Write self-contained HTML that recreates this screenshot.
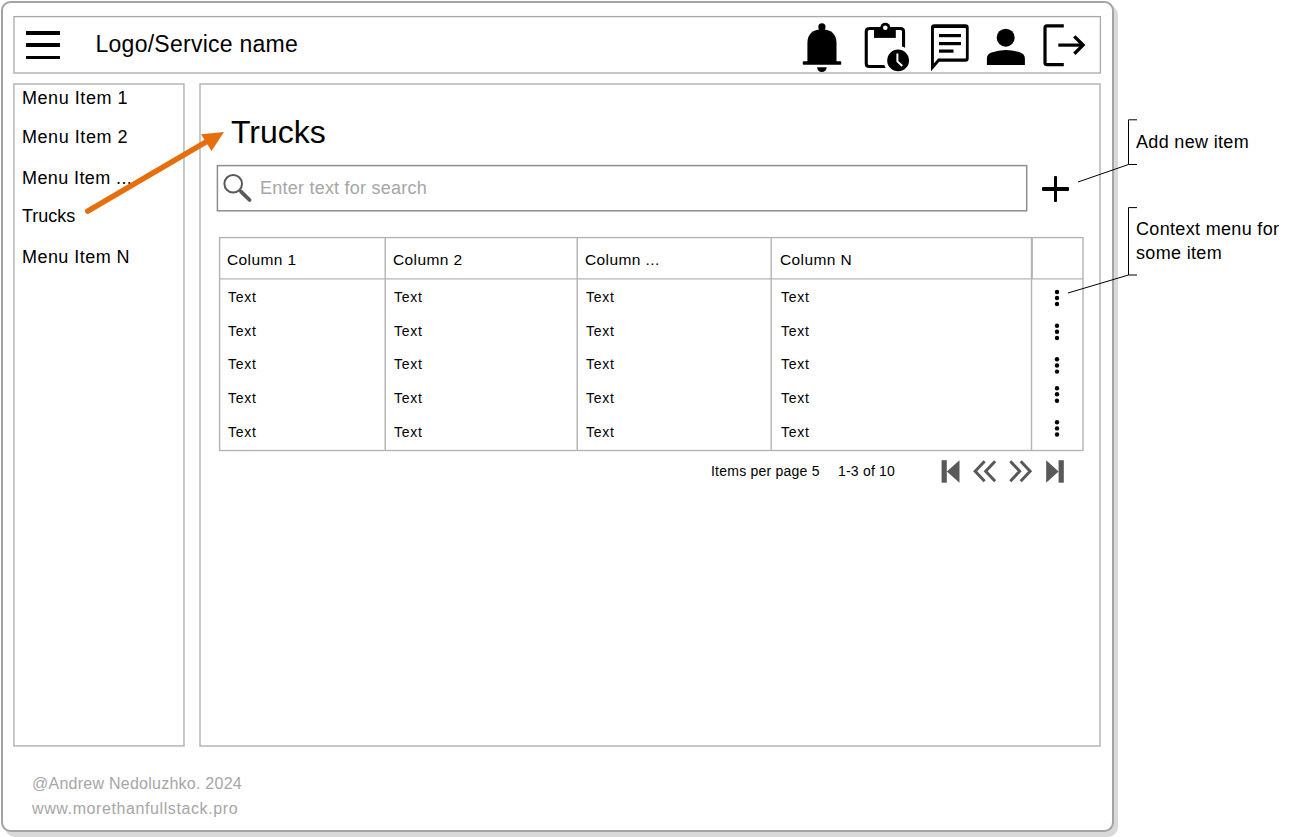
<!DOCTYPE html>
<html><head><meta charset="utf-8">
<style>
html,body{margin:0;padding:0;background:#fff;}
body{width:1295px;height:837px;position:relative;overflow:hidden;font-family:"Liberation Sans",sans-serif;color:#000;}
.a{position:absolute;white-space:nowrap;}
.box{position:absolute;box-sizing:border-box;border:1px solid #a6a6a6;background:#fff;}
.t{position:absolute;white-space:nowrap;line-height:1;transform-origin:0 0;}
</style></head><body>
<!-- outer frame shadow -->
<div class="a" style="left:5px;top:5px;width:1113px;height:832px;border-radius:10px;background:#d9d9d9;"></div>
<div class="a" style="left:1px;top:1px;width:1113px;height:831px;box-sizing:border-box;border:2px solid #a4a4a4;border-radius:9.5px;background:#fff;"></div>

<!-- header -->
<!-- hamburger -->
<div class="a" style="left:26px;top:31.05px;width:34px;height:3.5px;background:#000;border-radius:0.5px;"></div>
<div class="a" style="left:26px;top:43.35px;width:34px;height:3.5px;background:#000;border-radius:0.5px;"></div>
<div class="a" style="left:26px;top:55.75px;width:34px;height:3.5px;background:#000;border-radius:0.5px;"></div>
<div class="t" style="left:95.5px;top:33px;font-size:23px;letter-spacing:0.26px;">Logo/Service name</div>

<!-- header icons -->
<svg class="a" style="left:0;top:0" width="1295" height="100" viewBox="0 0 1295 100">
  <!-- bell -->
  <circle cx="821.9" cy="26.9" r="3.6" fill="#000"/>
  <path d="M807.4 62 L807.4 43 C807.4 34 813 29.3 821.9 29.3 C830.8 29.3 836.5 34 836.5 43 L836.5 62 Z" fill="#000"/>
  <rect x="802.8" y="61.2" width="38.4" height="3.5" rx="0.8" fill="#000"/>
  <path d="M817.1 67.3 L826.7 67.3 A4.8 4.8 0 0 1 817.1 67.3 Z" fill="#000"/>
  <!-- clipboard -->
  <path d="M869 28.55 L900.5 28.55 Q903.55 28.55 903.55 31.6 L903.55 63.4 Q903.55 66.45 900.5 66.45 L869.3 66.45 Q866.25 66.45 866.25 63.4 L866.25 31.6 Q866.25 28.55 869.3 28.55 Z" fill="none" stroke="#000" stroke-width="3.1"/>
  <rect x="874" y="27" width="21.8" height="10.9" fill="#000"/>
  <circle cx="885.3" cy="27.8" r="5.1" fill="#000"/>
  <circle cx="885.3" cy="27.8" r="2.3" fill="#fff"/>
  <circle cx="898.1" cy="60.4" r="14.5" fill="#fff"/>
  <circle cx="898.1" cy="60.4" r="10.9" fill="#000"/>
  <path d="M897.4 53.6 L897.4 61.4 L902.3 66" fill="none" stroke="#fff" stroke-width="2"/>
  <!-- chat -->
  <path fill-rule="evenodd" fill="#000" d="M931 71.3 L931 27.6 Q931 24.3 934.3 24.3 L965.4 24.3 Q968.7 24.3 968.7 27.6 L968.7 58.5 Q968.7 61.8 965.4 61.8 L939.2 61.8 Z M933.9 63.4 L938.1 58.6 L965 58.6 Q965.9 58.6 965.9 57.7 L965.9 28.8 Q965.9 27.9 965 27.9 L934.8 27.9 Q933.9 27.9 933.9 28.8 Z"/>
  <rect x="939" y="34" width="22" height="3.2" fill="#000"/>
  <rect x="939" y="42" width="22" height="3.2" fill="#000"/>
  <rect x="939" y="49.5" width="14.5" height="3.2" fill="#000"/>
  <!-- person -->
  <circle cx="1005.7" cy="37.7" r="9" fill="#000"/>
  <path d="M986.9 65 L986.9 58.5 Q986.9 54.2 991.5 52.6 Q998.5 49.9 1005.8 49.9 Q1013 49.9 1020.2 52.6 Q1024.9 54.2 1024.9 58.5 L1024.9 65 Z" fill="#000"/>
  <!-- logout -->
  <path d="M1063.8 25.8 L1047 25.8 Q1045 25.8 1045 27.8 L1045 62.7 Q1045 64.7 1047 64.7 L1063.8 64.7" fill="none" stroke="#000" stroke-width="3.2"/>
  <path d="M1058.3 45.1 L1083 45.1" stroke="#000" stroke-width="3.2"/>
  <path d="M1074.3 36.4 L1083 45.1 L1074.3 53.8" fill="none" stroke="#000" stroke-width="3.4"/>
</svg>

<svg class="a" style="left:0;top:0" width="1295" height="837"><g fill="none" stroke="#b6b6b6" stroke-width="1.5">
<rect x="14" y="16.6" width="1086.4" height="56.4" stroke="#a9a9a9" stroke-width="1.3"/>
<rect x="13.9" y="84" width="170.05" height="661.9"/>
<rect x="200" y="84" width="900" height="662"/>
</g></svg>
<!-- sidebar -->
<div class="t" style="left:22px;top:89px;font-size:18px;letter-spacing:0.55px;">Menu Item 1</div>
<div class="t" style="left:22px;top:128px;font-size:18px;letter-spacing:0.55px;">Menu Item 2</div>
<div class="t" style="left:22px;top:168.5px;font-size:18px;letter-spacing:0.4px;">Menu Item ...</div>
<div class="t" style="left:22px;top:207px;font-size:18px;">Trucks</div>
<div class="t" style="left:22px;top:247.5px;font-size:18px;letter-spacing:0.45px;">Menu Item N</div>

<!-- main -->
<div class="t" style="left:231px;top:116px;font-size:32px;">Trucks</div>

<!-- search -->
<svg class="a" style="left:0;top:0" width="1295" height="837"><rect x="217.4" y="165.6" width="809.3" height="45.2" fill="none" stroke="#8e8e8e" stroke-width="1.5"/></svg>
<svg class="a" style="left:217px;top:165px" width="50" height="47">
  <circle cx="16.2" cy="18.8" r="8.8" fill="none" stroke="#595959" stroke-width="2"/>
  <path d="M24 26.6 L32.6 35" stroke="#595959" stroke-width="3.8" stroke-linecap="round"/>
</svg>
<div class="t" style="left:260px;top:179px;font-size:18px;letter-spacing:0.23px;color:#a6a6a6;">Enter text for search</div>

<!-- plus -->
<div class="a" style="left:1042px;top:187px;width:27px;height:3.5px;background:#000;border-radius:1px;"></div>
<div class="a" style="left:1053.6px;top:176px;width:3.5px;height:26px;background:#000;border-radius:1px;"></div>

<!-- table -->
<svg class="a" style="left:0;top:0" width="1295" height="837">
  <g stroke="#b4b4b4" stroke-width="1.4" fill="none">
    <rect x="219.6" y="237.6" width="863.4" height="212.9"/>
    <line x1="219" y1="278.9" x2="1083" y2="278.9"/>
    <line x1="385.2" y1="237" x2="385.2" y2="451"/>
    <line x1="577.2" y1="237" x2="577.2" y2="451"/>
    <line x1="771.2" y1="237" x2="771.2" y2="451"/>
    <line x1="1031.5" y1="237" x2="1031.5" y2="451"/>
    <line x1="1032.2" y1="237" x2="1032.2" y2="279"/>
  </g>
  <g fill="#000">
    <circle cx="1057" cy="292" r="2.2"/><circle cx="1057" cy="298" r="2.2"/><circle cx="1057" cy="304" r="2.2"/>
    <circle cx="1057" cy="325.7" r="2.2"/><circle cx="1057" cy="331.8" r="2.2"/><circle cx="1057" cy="338" r="2.2"/>
    <circle cx="1057" cy="359.3" r="2.2"/><circle cx="1057" cy="365.5" r="2.2"/><circle cx="1057" cy="371.6" r="2.2"/>
    <circle cx="1057" cy="388.2" r="2.2"/><circle cx="1057" cy="394.3" r="2.2"/><circle cx="1057" cy="400.7" r="2.2"/>
    <circle cx="1057" cy="422.3" r="2.2"/><circle cx="1057" cy="428.4" r="2.2"/><circle cx="1057" cy="434.5" r="2.2"/>
  </g>
  <!-- pagination icons -->
  <g fill="#595959">
    <rect x="941.6" y="460.2" width="5.2" height="22.5"/>
    <path d="M946.8 471.4 L959.5 460.2 L959.5 482.7 Z"/>
    <path d="M1046.2 460.2 L1058.6 471.4 L1046.2 482.7 Z"/>
    <rect x="1058.6" y="460.2" width="5.2" height="22.5"/>
  </g>
  <g fill="none" stroke="#595959" stroke-width="3">
    <path d="M984.6 461.2 L975.2 471.2 L984.6 481.2"/>
    <path d="M995.1 461.2 L985.7 471.2 L995.1 481.2"/>
    <path d="M1010.3 461.2 L1019.7 471.2 L1010.3 481.2"/>
    <path d="M1020.7 461.2 L1030.1 471.2 L1020.7 481.2"/>
  </g>
  <!-- annotations -->
  <g stroke="#000" stroke-width="1" fill="none">
    <path d="M1137 119.8 L1128.5 119.8 L1128.5 164.5 L1137 164.5"/>
    <path d="M1128.5 164.5 L1078 182"/>
    <path d="M1137 207.6 L1128.5 207.6 L1128.5 275 L1137 275"/>
    <path d="M1128.5 275 L1068 293"/>
  </g>
  <!-- orange arrow -->
  <path d="M87.7 211.2 L207 141.4" stroke="#e66f0d" stroke-width="5.4" stroke-linecap="round"/>
  <path d="M224 132 L201 134.2 L211.5 151 Z" fill="#e66f0d"/>
</svg>

<div class="t" style="left:227px;top:252px;font-size:15.5px;letter-spacing:0.4px;">Column 1</div>
<div class="t" style="left:393px;top:252px;font-size:15.5px;letter-spacing:0.4px;">Column 2</div>
<div class="t" style="left:585px;top:252px;font-size:15.5px;letter-spacing:0.4px;">Column ...</div>
<div class="t" style="left:780px;top:252px;font-size:15.5px;letter-spacing:0.4px;">Column N</div>

<div class="t" style="left:228px;top:290px;font-size:14px;letter-spacing:0.7px;">Text</div>
<div class="t" style="left:394px;top:290px;font-size:14px;letter-spacing:0.7px;">Text</div>
<div class="t" style="left:586px;top:290px;font-size:14px;letter-spacing:0.7px;">Text</div>
<div class="t" style="left:781px;top:290px;font-size:14px;letter-spacing:0.7px;">Text</div>
<div class="t" style="left:228px;top:324px;font-size:14px;letter-spacing:0.7px;">Text</div>
<div class="t" style="left:394px;top:324px;font-size:14px;letter-spacing:0.7px;">Text</div>
<div class="t" style="left:586px;top:324px;font-size:14px;letter-spacing:0.7px;">Text</div>
<div class="t" style="left:781px;top:324px;font-size:14px;letter-spacing:0.7px;">Text</div>
<div class="t" style="left:228px;top:357px;font-size:14px;letter-spacing:0.7px;">Text</div>
<div class="t" style="left:394px;top:357px;font-size:14px;letter-spacing:0.7px;">Text</div>
<div class="t" style="left:586px;top:357px;font-size:14px;letter-spacing:0.7px;">Text</div>
<div class="t" style="left:781px;top:357px;font-size:14px;letter-spacing:0.7px;">Text</div>
<div class="t" style="left:228px;top:391px;font-size:14px;letter-spacing:0.7px;">Text</div>
<div class="t" style="left:394px;top:391px;font-size:14px;letter-spacing:0.7px;">Text</div>
<div class="t" style="left:586px;top:391px;font-size:14px;letter-spacing:0.7px;">Text</div>
<div class="t" style="left:781px;top:391px;font-size:14px;letter-spacing:0.7px;">Text</div>
<div class="t" style="left:228px;top:425px;font-size:14px;letter-spacing:0.7px;">Text</div>
<div class="t" style="left:394px;top:425px;font-size:14px;letter-spacing:0.7px;">Text</div>
<div class="t" style="left:586px;top:425px;font-size:14px;letter-spacing:0.7px;">Text</div>
<div class="t" style="left:781px;top:425px;font-size:14px;letter-spacing:0.7px;">Text</div>

<div class="t" style="left:711px;top:464px;font-size:14px;letter-spacing:0.23px;">Items per page 5</div>
<div class="t" style="left:838px;top:464px;font-size:14px;letter-spacing:0.2px;">1-3 of 10</div>

<!-- annotations text -->
<div class="t" style="left:1136px;top:133px;font-size:18px;letter-spacing:0.33px;">Add new item</div>
<div class="t" style="left:1136px;top:220px;font-size:18px;letter-spacing:0.33px;">Context menu for</div>
<div class="t" style="left:1136px;top:244px;font-size:18px;letter-spacing:0.33px;">some item</div>

<!-- footer -->
<div class="t" style="left:32px;top:776px;font-size:16px;letter-spacing:0.25px;color:#a6a6a6;">@Andrew Nedoluzhko. 2024</div>
<div class="t" style="left:32px;top:801px;font-size:16px;letter-spacing:0.6px;color:#a6a6a6;">www.morethanfullstack.pro</div>
</body></html>
